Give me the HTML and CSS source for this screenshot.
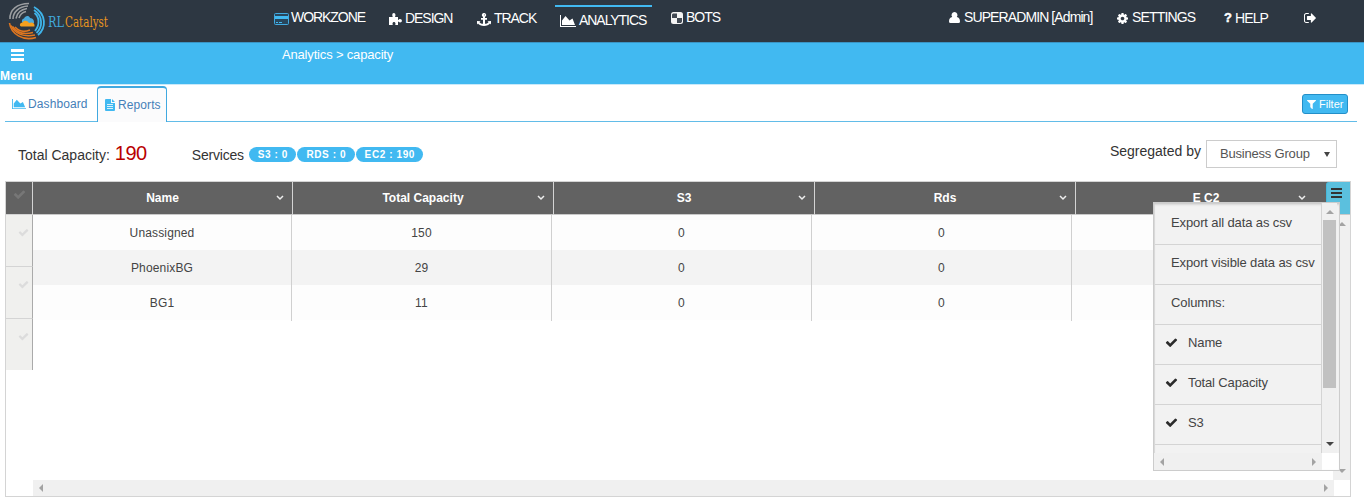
FILE: index.html
```html
<!DOCTYPE html>
<html lang="en">
<head>
<meta charset="utf-8">
<title>RLCatalyst</title>
<link rel="stylesheet" href="styles.css">
</head>
<body>
<svg class="defs" width="0" height="0">
  <symbol id="check" viewBox="0 0 1792 1792"><path d="M1671 566q0 40-28 68l-724 724-136 136q-28 28-68 28t-68-28l-136-136-362-362q-28-28-28-68t28-68l136-136q28-28 68-28t68 28l294 295 656-657q28-28 68-28t68 28l136 136q28 28 28 68z"/></symbol>
  <symbol id="cog" viewBox="128 128 1536 1536"><path d="M1152 896q0-106-75-181t-181-75-181 75-75 181 75 181 181 75 181-75 75-181zm512-109v222q0 12-8 23t-20 13l-185 28q-19 54-39 91 35 50 107 138 10 12 10 25t-9 23q-27 37-99 108t-94 71q-12 0-26-9l-138-108q-44 23-91 38-16 136-29 186-7 28-36 28h-222q-14 0-24.5-8.5t-11.5-21.5l-28-184q-49-16-90-37l-141 107q-10 9-25 9-14 0-25-11-126-114-165-168-7-10-7-23 0-12 8-23 15-21 51-66.5t54-70.5q-27-50-41-99l-183-27q-13-2-21-12.5t-8-23.5v-222q0-12 8-23t19-13l186-28q14-46 39-92-40-57-107-138-10-12-10-24 0-10 9-23 26-36 98.5-107.5t94.5-71.5q13 0 26 10l138 107q44-23 91-38 16-136 29-186 7-28 36-28h222q14 0 24.5 8.5t11.5 21.5l28 184q49 16 90 37l142-107q9-9 24-9 13 0 25 10 129 119 165 170 7 8 7 22 0 12-8 23-15 21-51 66.5t-54 70.5q26 50 41 98l183 28q13 2 21 12.5t8 23.5z"/></symbol>
  <symbol id="chart" viewBox="0 0 16 12" preserveAspectRatio="none"><path d="M0 0h1v11h15v1H0zM2 10V5.500L5.500 1 9.500 5.500 12.500 3.500 15 10z"/></symbol>
  <symbol id="caret" viewBox="0 0 8 6"><path d="M1 1l3 3 3-3" fill="none" stroke="currentColor" stroke-width="1.5"/></symbol>
</svg>

<header class="topbar">
  <svg class="logo" width="116" height="42" viewBox="0 0 116 42">
    <g fill="none">
      <g stroke="#9b9ea1" stroke-width="1.6">
        <path d="M10 19C9.500 10 17 3.500 29 3.500"/><path d="M13 19C13 12 19 6.500 28 6"/><path d="M16 18.500C17 13 21 9.500 27 8.500"/><path d="M19 18C20 14.500 22 12.500 26 11.500"/>
      </g>
      <g stroke="#e0761f" stroke-width="1.6">
        <path d="M9.500 23C11 34 23 41.500 36 37.500"/><path d="M11 25.500C15 34 24 37.500 35 35"/><path d="M12.500 26.500C17 33 24 35 33 32.500"/><path d="M15 27C19 31.500 24 32.500 30 30"/>
      </g>
      <g stroke="#3fb4ea" stroke-width="1.8">
        <path d="M34 7C46.500 14 46.500 28 38 35"/><path d="M34 10C43 16 43 27 36.500 33"/><path d="M34.500 13C39.500 17 40 25 35 31"/>
      </g>
    </g>
    <path d="M23 23c-2-1-1-4.500 1-4.500 1-3 5-3.500 6-.5 3 0 4.500 3 4 5l-3 1.500h-8z" fill="#4aa9dc"/>
    <path d="M21 26.500c-2-1-1-4 1.500-4 1-2.500 5-2.500 6.500.5 3-1.500 6 0 5.500 3.500H21z" fill="#f5a01e"/>
    <text class="wordmark blue" x="48" y="27" textLength="16" lengthAdjust="spacingAndGlyphs">RL</text>
    <text class="wordmark orange" x="65" y="27" textLength="43" lengthAdjust="spacingAndGlyphs">Catalyst</text>
  </svg>
  <nav class="nav main-nav">
    <a class="item"><svg class="workzone" width="15" height="12" viewBox="0 0 15 12"><rect x=".5" y=".5" width="14" height="11" rx="1" fill="#28465c" stroke="#41a9e0"/><path d="M1 3h13v3H1z" fill="#41b9f1"/><path d="M2 9.500h2m1 0h3" stroke="#41b9f1"/></svg>WORKZONE</a>
    <a class="item low"><svg width="13" height="12" viewBox="0 0 13 12" fill="#fff"><path d="M0 4h3.800C2.800 2 3.200 0 4.800 0s2.100 2 1.200 4H9v3c1-.3 1-1 2-1 2.500 0 2.500 3.500 0 3.500-1 0-1-.8-2-1V12H6.200C7 10 6 9 5 9s-2 1-1.200 3H0z"/></svg><span>DESIGN</span></a>
    <a class="item low"><svg width="14" height="13" viewBox="0 0 14 13" fill="#fff"><path d="M7 0a2 2 0 0 1 1 3.800V5h2v1.800H8v4c2-.2 3-.8 3.500-1.600L10.500 8.200 14 8v3.500l-1-1C12 12 9.500 13 7 13s-5-1-6-2.500l-1 1V8l3.500.2-1 1C3 10 4 10.600 6 10.800v-4H4V5h2V3.800A2 2 0 0 1 7 0zm0 1.200v1.300h.5V1.200z"/></svg>TRACK</a>
    <a class="item active"><svg width="16" height="12" fill="#fff"><use href="#chart"/></svg>ANALYTICS</a>
    <a class="item"><svg width="12" height="12" viewBox="0 0 12 12"><rect width="12" height="12" rx="2.500" fill="#f4f4f4"/><path d="M2 1.500h4V6H1V2.500zM6 6h5v3.500L10 11H6z" fill="#434b55"/></svg>BOTS</a>
  </nav>
  <nav class="nav user-nav">
    <a class="item"><svg width="11" height="11" viewBox="0 0 11 11" fill="#fff"><path d="M5.500 0a3 3 0 0 1 2.300 4.900C10 5 11 7 11 9.500q0 1.500-1.500 1.500h-8Q0 11 0 9.500C0 7 1 5 3.200 4.900A3 3 0 0 1 5.500 0z"/></svg><span class="username">SUPERADMIN [Admin]</span></a>
    <a class="item"><svg class="gear" width="11" height="11" fill="#fff"><use href="#cog"/></svg><span class="settings">SETTINGS</span></a>
    <a class="item low"><b class="question">?</b><span class="help">HELP</span></a>
    <a class="item low"><svg width="12" height="10" viewBox="64 256 1568 1280" fill="#fff"><path d="M704 1440q0 90-34 96H350q-119 0-203.500-84.500T62 1248V544q0-119 84.500-203.500T350 256h320q34 0 34 128H352q-90 0-160 160v704q0 160 160 160h312q40 0 40 32zm928-544q0 26-19 45l-544 544q-19 19-45 19t-45-19-19-45v-288H512q-64 0-64-64V704q0-64 64-64h448V352q0-64 64-64 26 0 45 19l544 544q19 19 19 45z"/></svg></a>
  </nav>
</header>

<div class="subbar">
  <div class="menu-toggle"><span class="bars"><i></i><i></i><i></i></span><b>Menu</b></div>
  <div class="breadcrumb">Analytics &gt; capacity</div>
</div>

<div class="tabs">
  <a class="tab"><svg width="14" height="10" fill="#41b9f1"><use href="#chart"/></svg>Dashboard</a>
  <a class="tab selected"><svg width="10" height="12" viewBox="0 0 10 12"><path d="M1 0h5v4h4v7q0 1-1 1H1q-1 0-1-1V1q0-1 1-1zm6 0l3 3H7z" fill="#41b9f1"/><path d="M2 5.500h6M2 7.500h6M2 9.500h6" stroke="#fff" stroke-width=".8"/></svg>Reports</a>
  <button class="filter"><svg width="9" height="9" viewBox="192 256 1408 1408" fill="#fff"><path d="M1595 295q17 41-14 70l-493 493v742q0 42-39 59-13 5-25 5-27 0-45-19l-256-256q-19-19-19-45V858L211 365q-31-29-14-70 17-39 59-39h1280q42 0 59 39z"/></svg>Filter</button>
</div>

<section class="summary">
  <span>Total Capacity:</span><span class="total">190</span>
  <span class="services">Services</span>
  <span class="badges"><b class="s3">S3 : 0</b><b class="rds">RDS : 0</b><b class="ec2">EC2 : 190</b></span>
  <span class="segregated">Segregated by</span>
  <span class="select"><span>Business Group</span><i></i></span>
</section>

<main class="grid">
  <aside class="row-heads">
    <div class="head"><svg width="13" height="13"><use href="#check"/></svg></div>
    <div class="row"><svg width="11" height="11"><use href="#check"/></svg></div>
    <div class="row"><svg width="11" height="11"><use href="#check"/></svg></div>
    <div class="row"><svg width="11" height="11"><use href="#check"/></svg></div>
  </aside>
  <div class="table">
    <div class="cols header">
      <div>Name<svg width="8" height="6"><use href="#caret"/></svg></div>
      <div>Total Capacity<svg width="8" height="6"><use href="#caret"/></svg></div>
      <div>S3<svg width="8" height="6"><use href="#caret"/></svg></div>
      <div>Rds<svg width="8" height="6"><use href="#caret"/></svg></div>
      <div class="last">E C2<svg width="8" height="6"><use href="#caret"/></svg></div>
      <button class="grid-menu"><i></i><i></i><i></i></button>
    </div>
    <div class="viewport">
      <div class="rows">
        <div class="cols data"><div>Unassigned</div><div>150</div><div>0</div><div>0</div><div></div></div>
        <div class="cols data even"><div>PhoenixBG</div><div>29</div><div>0</div><div>0</div><div></div></div>
        <div class="cols data"><div>BG1</div><div>11</div><div>0</div><div>0</div><div></div></div>
      </div>
      <div class="vscroll"><i class="up"></i><i class="down"></i></div>
    </div>
    <div class="hscroll"><i class="left"></i><i class="right"></i></div>
  </div>

  <div class="popup">
    <div class="popup-view">
      <ul>
        <li>Export all data as csv</li>
        <li>Export visible data as csv</li>
        <li>Columns:</li>
        <li><svg width="13" height="13"><use href="#check"/></svg>Name</li>
        <li><svg width="13" height="13"><use href="#check"/></svg>Total Capacity</li>
        <li><svg width="13" height="13"><use href="#check"/></svg>S3</li>
      </ul>
      <div class="popup-vscroll"><i class="up"></i><span class="thumb"></span><i class="down dark"></i></div>
    </div>
    <div class="popup-hscroll"><i class="left"></i><i class="right"></i></div>
  </div>
</main>
</body>
</html>
```

FILE: styles.css
```css
* { box-sizing: border-box; }
body { margin: 0; width: 1364px; height: 502px; overflow: hidden; background: #fff; font: 14px "Liberation Sans", Arial, sans-serif; color: #333; }
svg { display: block; flex: none; }
.defs { position: absolute; }
ul { list-style: none; margin: 0; padding: 0; }
button { font: inherit; border: 0; padding: 0; }

/* top navigation */
.topbar { display: flex; height: 43px; background: #2d3742; border-bottom: 1px solid #3a94c4; }
.logo { margin-right: 158px; overflow: visible; }
.wordmark { font: 15.5px "DejaVu Serif", serif; stroke-width: 0; }
.blue { fill: #41a9dc; }
.orange { fill: #e8951f; }
.nav { display: grid; color: #fff; letter-spacing: -1.05px; line-height: 16px; }
.main-nav { grid-template-columns: 115px 88px 78px 116px 278px; }
.user-nav { grid-template-columns: 168px 107px 80px 30px; }
.item { display: flex; align-items: flex-start; gap: 3px; padding-top: 9px; white-space: nowrap; }
.item svg { margin-top: 3px; }
.item.low { padding-top: 10px; }
.item .workzone { margin-right: -1px; margin-top: 4px; }
.item.active { width: 97px; height: 25px; margin-top: 5px; border-top: 2px solid #41b9f1; padding: 5px 0 0 5px; }
.item.active svg { margin-top: 3px; }
.username { letter-spacing: -.9px; margin-left: 1px; }
.settings { letter-spacing: -.85px; margin-left: 1px; }
.item .gear { margin-top: 4px; }
.help { letter-spacing: -.9px; margin-left: 1px; }
.question { font-size: 13px; width: 7px; letter-spacing: 0; -webkit-text-stroke: .4px #fff; }

.subbar { display: flex; height: 42px; background: #41b9f1; color: #fff; border-bottom: 1px solid #c8e9fa; }
.menu-toggle { width: 282px; padding-top: 6px; font-size: 12px; }
.menu-toggle b { display: block; margin-top: 8px; letter-spacing: .35px; line-height: 14px; }
.bars { display: flex; flex-direction: column; gap: 2px; width: 13px; margin-left: 11px; }
.bars i { height: 2.700px; background: #fff; }
.breadcrumb { padding-top: 4px; font-size: 13px; line-height: 16px; letter-spacing: -.17px; }

.tabs { display: flex; align-items: flex-end; height: 37px; margin: 0 7px 0 5px; border-bottom: 1px solid #62bce8; font-size: 12px; letter-spacing: .1px; color: #4580b8; }
.tab { display: flex; width: 92px; height: 35px; padding: 11px 0 0 7px; gap: 2px; line-height: 14px; white-space: nowrap; }
.tab svg { margin-top: 2px; }
.tab.selected { width: 70px; height: 36px; margin-bottom: -1px; padding: 10px 0 0 7px; gap: 3px; border: 1px solid #41a9e0; border-top-width: 2px; border-bottom: 0; border-radius: 4px 4px 0 0; background: #fbfbfc; }
.tab.selected svg { margin-top: 1px; }
.filter { display: flex; align-items: center; gap: 3px; width: 46px; height: 20px; margin: 0 9px 7px auto; padding-left: 4px; color: #fff; font-size: 11px; letter-spacing: 0; background: #41b9f1; border: 1px solid #238fc8; border-radius: 3px; }

.summary { display: flex; height: 59px; padding-left: 18px; line-height: 18px; padding-top: 24px; white-space: nowrap; }
.total { margin: -3px 0 0 5px; width: 77px; color: #b90000; font-size: 20px; line-height: 20px; letter-spacing: -.5px; }
.services { letter-spacing: -.2px; width: 57px; }
.badges { display: flex; gap: 1px; margin-top: 1px; }
.badges b { height: 15px; border-radius: 8px; background: #41b9f1; color: #fff; font-size: 10px; line-height: 16px; text-align: center; letter-spacing: .6px; padding-left: 1px; }
.s3 { width: 47px; }
.rds { width: 58px; }
.ec2 { width: 67px; }
.segregated { margin: -4px 5px 0 auto; }
.select { display: flex; justify-content: space-between; width: 131px; height: 28px; margin: -6px 27px 0 0; padding: 0 6px 0 13px; border: 1px solid #ccc; color: #555; font-size: 13px; line-height: 25px; letter-spacing: -.2px; }
.select i { border: 3px solid transparent; border-top: 5px solid #444; border-bottom: 0; height: 5px; margin-top: 11px; }

/* data grid */
.grid { position: relative; display: flex; width: 1346px; height: 316px; margin-left: 5px; border: 1px solid #d4d4d4; }
.row-heads { width: 27px; }
.row-heads .head { height: 33px; padding: 6px 0 0 7px; background: #626262; border-right: 1px solid #d4d4d4; border-bottom: 1px solid #d4d4d4; fill: #777; }
.row-heads .row { height: 52px; padding: 12px 0 0 12px; background: #f0f0ee; border-right: 1px solid #aaa; border-bottom: 1px solid #d4d4d4; fill: #dcdcdc; }
.row-heads .row:last-child { height: 51px; border-bottom: 0; }
.table { width: 1317px; display: flex; flex-direction: column; }
.cols { display: grid; text-align: center; }
.header { grid-template-columns: 260px 261px 261px 261px 250px 24px; height: 33px; background: #626262; border-bottom: 1px solid #c8c8c8; color: #fff; font-size: 12px; font-weight: bold; line-height: 33px; letter-spacing: 0; }
.header div { display: grid; grid-template-columns: 1fr 8px; padding: 0 8px 0 16px; border-right: 1px solid #d4d4d4; }
.header .last { border: 0; padding: 0 20px 0 38px; }
.header svg { align-self: center; color: #eee; margin-top: -1px; }
.grid-menu { display: flex; flex-direction: column; gap: 2px; height: 32px; padding: 6px 8px 0 4px; background: #5bc0de; border-radius: 3px 0 0; border-left: 1px solid #46b8da; }
.grid-menu i { flex: none; height: 2px; background: #333; }
.viewport { display: flex; flex: 1; }
.rows { width: 1300px; }
.data { grid-template-columns: 259px 260px 260px 260px 261px; height: 35px; background: #fdfdfd; font-size: 12px; line-height: 36px; letter-spacing: .15px; color: #444; }
.data.even { background: #f3f3f3; }
.data div { border-right: 1px solid #d0d0d0; }
.data div:last-child { border: 0; }
.vscroll, .popup-vscroll { display: flex; flex-direction: column; align-items: center; justify-content: space-between; background: #f0f0f0; }
.vscroll { width: 17px; padding: 7px 0 7px 0; }
.hscroll, .popup-hscroll { display: flex; align-items: center; justify-content: space-between; width: 1301px; height: 16px; padding: 0 6px; background: #f0f0f0; }
.up { border: 4px solid transparent; border-top: 0; border-bottom: 4px solid #a3a3a3; }
.down { border: 4px solid transparent; border-bottom: 0; border-top: 4px solid #a3a3a3; }
.left { border: 4px solid transparent; border-left: 0; border-right: 4px solid #a3a3a3; }
.right { border: 4px solid transparent; border-right: 0; border-left: 4px solid #a3a3a3; }
.down.dark { border-top-color: #444; }

/* column menu overlays the grid */
.popup { position: absolute; left: 1147px; top: 20px; width: 187px; height: 269px; border: 1px solid #ccc; background: #fff; box-shadow: inset 1px 1px 2px #ccc; }
.popup-view { display: flex; height: 250px; margin-left: 1px; background: #f2f2f2; box-shadow: inset 0 3px 3px -2px #bbb; overflow: hidden; }
.popup ul { width: 167px; border-right: 1px solid #d4d4d4; }
.popup li { display: flex; align-items: flex-start; height: 40px; padding: 10px 0 0 16px; border-bottom: 1px solid #d4d4d4; font-size: 13px; line-height: 15px; letter-spacing: -.12px; color: #444; white-space: nowrap; }
.popup li:first-child { height: 42px; padding-top: 12px; }
.popup li svg { margin: 1px 10px 0 -6px; fill: #2c2c2c; }
.popup-vscroll { width: 15px; padding: 7px 1px; }
.thumb { width: 13px; height: 168px; margin-top: 6px; margin-bottom: auto; background: #c1c1c1; }
.popup-hscroll { width: 168px; height: 17px; }
```
